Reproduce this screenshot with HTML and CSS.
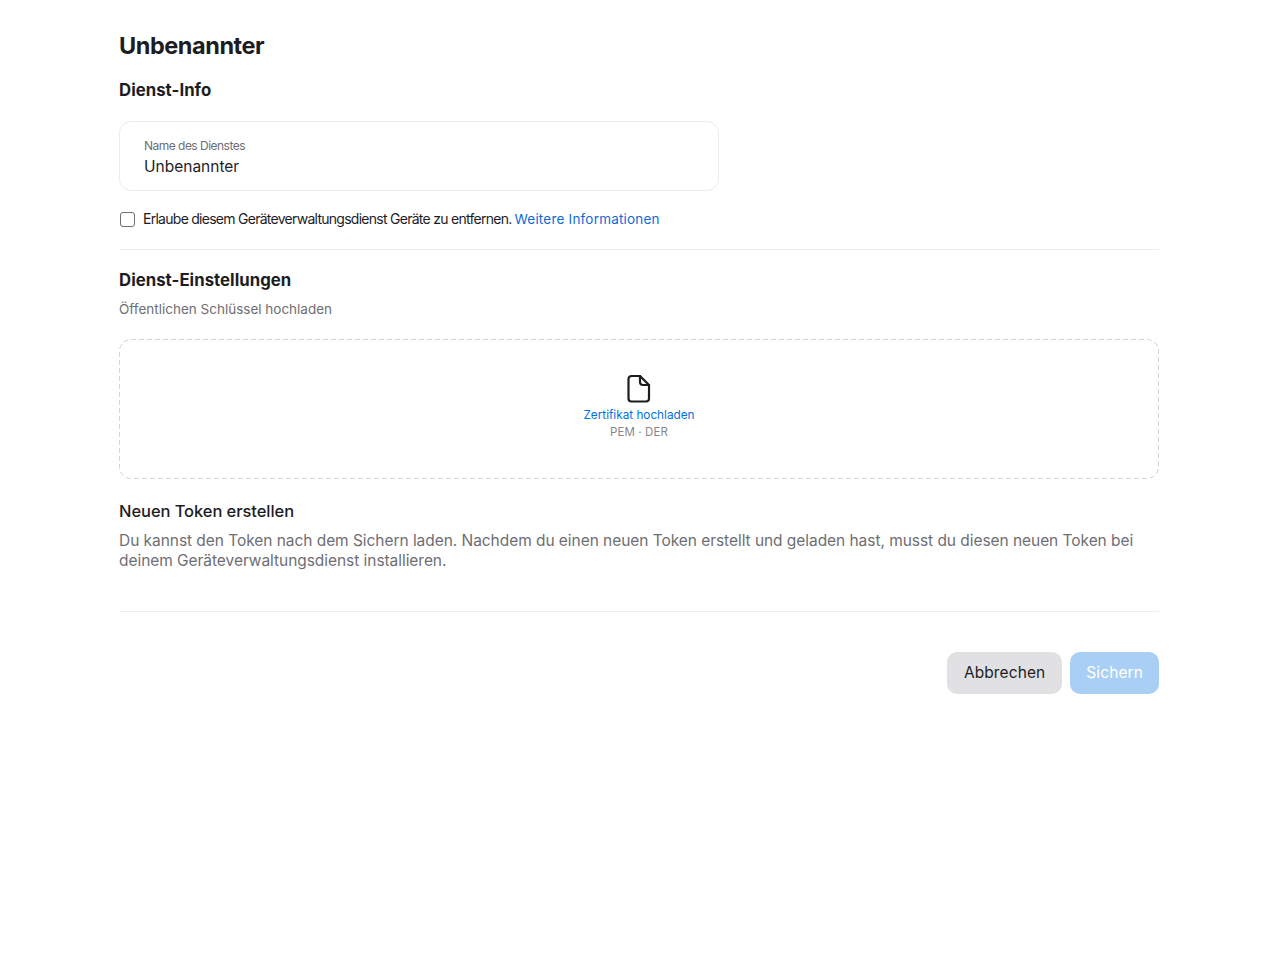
FILE: index.html
```html
<!DOCTYPE html>
<html lang="de">
<head>
<meta charset="utf-8">
<title>Unbenannter</title>
<link rel="stylesheet" href="styles.css">
</head>
<body>
<main class="page">
  <h1 class="title">Unbenannter</h1>
  <h2 class="section-title">Dienst-Info</h2>
  <div class="field">
    <label class="field-label">Name des Dienstes</label>
    <div class="field-value">Unbenannter</div>
  </div>
  <div class="check-row">
    <span class="checkbox"></span>
    <span class="check-text">Erlaube diesem Geräteverwaltungsdienst Geräte zu entfernen.</span>
    <a class="link">Weitere Informationen</a>
  </div>
  <hr class="rule rule-first">
  <h2 class="section-title settings-title">Dienst-Einstellungen</h2>
  <p class="subtle">Öffentlichen Schlüssel hochladen</p>
  <div class="drop">
    <svg class="drop-border" width="1040" height="140" viewBox="0 0 1040 140" fill="none">
      <rect x="0.500" y="0.500" width="1039" height="139" rx="11.500" stroke="#d2d2d7" stroke-dasharray="5 3"/>
    </svg>
    <svg class="file-icon" width="24" height="30" viewBox="0 0 24 30" fill="none" stroke="#1d1d1f" stroke-width="2.200" stroke-linejoin="round" stroke-linecap="round">
      <path d="M4.500 2H13L22 11V24.500A3 3 0 0 1 19 27.500H4.500A3 3 0 0 1 1.500 24.500V5A3 3 0 0 1 4.500 2Z"/>
      <path d="M13 2V8A3 3 0 0 0 16 11H22"/>
    </svg>
    <a class="drop-link">Zertifikat hochladen</a>
    <span class="drop-hint">PEM · DER</span>
  </div>
  <h3 class="token-title">Neuen Token erstellen</h3>
  <p class="token-text">Du kannst den Token nach dem Sichern laden. Nachdem du einen neuen Token erstellt und geladen hast, musst du diesen neuen Token bei deinem Geräteverwaltungsdienst installieren.</p>
  <hr class="rule rule-second">
  <div class="actions">
    <button class="btn btn-cancel">Abbrechen</button>
    <button class="btn btn-save" disabled>Sichern</button>
  </div>
</main>
</body>
</html>
```
FILE: styles.css
```css
* { box-sizing: border-box; }
html, body { margin: 0; background: #fff; }
body { font-family: Inter, "Liberation Sans", sans-serif; color: #1d1d1f; }
.page { width: 1040px; margin-left: 119px; display: flex; flex-direction: column; padding-top: 31px; }
.title { margin: 0; font-size: 23.500px; line-height: 30px; font-weight: 700; letter-spacing: -0.45px; }
.section-title { margin: 19px 0 0; font-size: 16.750px; line-height: 21px; font-weight: 700; letter-spacing: 0.04px; }
.field { margin-top: 20px; width: 600px; height: 70px; border: 1px solid #ececee; border-radius: 12px; padding: 15px 24px 0; }
.field-label { display: block; font-size: 12px; line-height: 17px; color: #6e6e73; letter-spacing: -0.52px; }
.field-value { font-size: 15.500px; line-height: 20px; margin-top: 3px; color: #1d1d1f; }
.check-row { display: flex; align-items: center; margin-top: 19px; height: 18px; font-size: 14px; line-height: 18px; }
.checkbox { width: 14.500px; height: 14.500px; margin: 1px 8.500px 0 1px; border: 1.500px solid #6e6e73; border-radius: 3px; background: #fff; flex: none; }
.check-text { letter-spacing: -0.73px; white-space: pre; margin-right: 3px; }
.link { color: #0f6bd6; font-size: 13.500px; letter-spacing: 0.2px; }
.rule { border: 0; border-top: 1px solid #ececee; margin: 0; width: 100%; }
.rule-first { margin-top: 21px; }
.settings-title { margin-top: 20px; }
.subtle { margin: 9px 0 0; font-size: 13.500px; line-height: 18px; color: #6e6e73; }
.drop { position: relative; margin-top: 21px; height: 140px; display: flex; flex-direction: column; align-items: center; padding-top: 35px; }
.drop-border { position: absolute; left: 0; top: 0; }
.file-icon { display: block; }
.drop-link { font-size: 11.750px; line-height: 16px; color: #0071e3; margin-top: 3px; }
.drop-hint { font-size: 11.500px; line-height: 16px; color: #86868b; margin-top: 1px; letter-spacing: 0.1px; }
.token-title { margin: 22px 0 0; font-size: 16.500px; line-height: 21px; font-weight: 500; letter-spacing: -0.07px; }
.token-text { margin: 9px 0 0; font-size: 15.500px; line-height: 20px; color: #6e6e73; letter-spacing: -0.05px; }
.rule-second { margin-top: 40px; }
.actions { display: flex; justify-content: flex-end; gap: 8px; margin-top: 40px; }
.btn { height: 42px; border: 0; border-radius: 10px; font-family: inherit; font-size: 15.500px; padding: 0 16px 1px; letter-spacing: 0.1px; }
.btn-cancel { background: #e1e1e3; color: #1d1d1f; padding: 0 17px 1px; }
.btn-save { background: #aacff5; color: #fff; }
```
